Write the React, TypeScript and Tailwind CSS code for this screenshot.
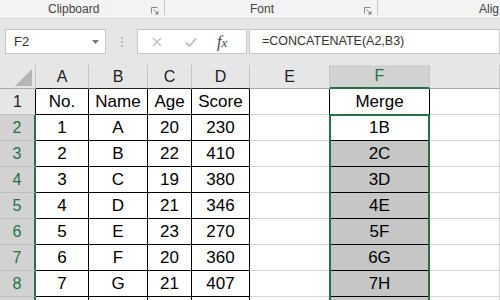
import React from 'react';

const GREEN = '#217346';

const columns = [
  { key: 'A', w: 'w-[53px]' },
  { key: 'B', w: 'w-[59px]' },
  { key: 'C', w: 'w-[44px]' },
  { key: 'D', w: 'w-[58px]' },
  { key: 'E', w: 'w-[80px]' },
  { key: 'F', w: 'w-[100px]' },
  // G is wide, its letter sits off screen
  { key: '', w: 'flex-1' },
];

const rows: string[][] = [
  ['No.', 'Name', 'Age', 'Score', '', 'Merge'],
  ['1', 'A', '20', '230', '', '1B'],
  ['2', 'B', '22', '410', '', '2C'],
  ['3', 'C', '19', '380', '', '3D'],
  ['4', 'D', '21', '346', '', '4E'],
  ['5', 'E', '23', '270', '', '5F'],
  ['6', 'F', '20', '360', '', '6G'],
  ['7', 'G', '21', '407', '', '7H'],
  ['', '', '', '', '', ''],
];

const Launcher = () => (
  <svg width="8" height="8" viewBox="0 0 8 8" className="block">
    <path d="M0.5 6.5 V0.5 H6.5" fill="none" stroke="#8a8a8a" strokeWidth="1" />
    <path d="M2.5 2.5 L6 6" stroke="#8a8a8a" strokeWidth="1" />
    <path d="M3.5 7.5 H7.5 V3.5 Z" fill="#8a8a8a" />
  </svg>
);

// table cells get black borders, the rest light gridlines
const cellClass = (col: number, row: number) => {
  const base = 'h-full flex items-center justify-center border-r border-b';
  if (col <= 3) return `${base} border-r-black border-b-black`;
  if (col === 4) return `${base} border-r-black border-b-[#d4d4d4]`;
  if (col === 5) return `${base} border-r-black border-b-black ${row >= 2 ? 'bg-[#c6c6c6]' : 'bg-white'}`;
  return `${base} border-r-[#d4d4d4] border-b-[#d4d4d4]`;
};

const App: React.FC = () => {
  return (
    <div className="w-[500px] h-[300px] overflow-hidden bg-[#e6e6e6] text-[#222]" style={{ fontFamily: '"Liberation Sans", Arial, sans-serif' }}>
      {/* Ribbon group labels */}
      <div className="h-[19px] bg-[#f3f3f3] border-b border-[#d8d8d8] flex text-[12px] text-[#444]">
        <div className="w-[165px] h-[15px] flex items-center border-r border-[#c6c6c6] pt-[3px]">
          <span className="ml-[48px]">Clipboard</span>
          <span className="ml-auto mr-[5px] mt-[4px]"><Launcher /></span>
        </div>
        <div className="w-[213px] h-[15px] flex items-center border-r border-[#c6c6c6] pt-[3px]">
          <span className="ml-[85px]">Font</span>
          <span className="ml-auto mr-[5px] mt-[4px]"><Launcher /></span>
        </div>
        <div className="h-[15px] flex items-center pt-[3px]">
          <span className="ml-[101px]">Alig</span>
        </div>
      </div>

      {/* Formula bar */}
      <div className="h-[46px] pt-[10px] flex">
        <div className="ml-[5px] w-[101px] h-[25px] bg-white border border-[#c6c6c6] flex items-center pl-[8px] pr-[6px]">
          <span className="text-[13px] text-[#333]">F2</span>
          <svg width="7" height="4" viewBox="0 0 7 4" className="ml-auto">
            <path d="M0 0 H7 L3.5 4 Z" fill="#777" />
          </svg>
        </div>
        <div className="w-[31px] h-[25px] flex flex-col items-center justify-center gap-[2px]">
          <span className="w-[2px] h-[2px] bg-[#b8b8b8]" />
          <span className="w-[2px] h-[2px] bg-[#b8b8b8]" />
          <span className="w-[2px] h-[2px] bg-[#b8b8b8]" />
        </div>
        <div className="w-[110px] h-[25px] bg-white border border-[#c6c6c6] flex items-center">
          <svg width="10" height="10" viewBox="0 0 10 10" className="ml-[14px]">
            <path d="M1 1 L9 9 M9 1 L1 9" stroke="#bdbdbd" strokeWidth="1.3" />
          </svg>
          <svg width="12" height="10" viewBox="0 0 12 10" className="ml-[23px]">
            <path d="M1 5.5 L4.5 9 L11 1.5" fill="none" stroke="#bdbdbd" strokeWidth="1.8" />
          </svg>
          <span className="ml-[20px] italic text-[#444] text-[16px] leading-none" style={{ fontFamily: '"Liberation Serif", serif' }}>
            f<span className="text-[13px]">x</span>
          </span>
        </div>
        <div className="ml-[2px] flex-1 h-[25px] bg-white border border-[#c6c6c6] flex items-center pl-[12px]">
          <span className="text-[12.5px] text-[#333]">=CONCATENATE(A2,B3)</span>
        </div>
      </div>

      {/* Column headers */}
      <div className="h-[24px] flex text-[16px]">
        <div className="w-[36px] h-full border-r border-b border-[#c6c6c6] border-b-[#ababab] flex items-end justify-end pr-[3px] pb-[2px]">
          <svg width="17" height="17" viewBox="0 0 17 17">
            <path d="M17 0 V17 H0 Z" fill="#b4b4b4" />
          </svg>
        </div>
        {columns.map((c, i) => (
          <div
            key={i}
            className={`${c.w} h-full flex items-center justify-center border-r border-r-[#c6c6c6] ${
              i === 5
                ? 'bg-[#d2d2d2] text-[#217346] border-b-2 border-b-[#217346]'
                : i <= 3
                ? 'border-b border-b-[#222]'
                : 'border-b border-b-[#ababab]'
            }`}
          >
            {c.key}
          </div>
        ))}
      </div>

      {/* Grid body */}
      <div className="relative">
        {rows.map((r, ri) => (
          <div key={ri} className="h-[26px] flex">
            <div
              className={`w-[36px] h-full flex items-center justify-center text-[16px] border-b border-b-[#c0c0c0] ${
                ri === 0
                  ? 'bg-[#e6e6e6] border-r border-r-black'
                  : 'bg-[#d2d2d2] text-[#217346] border-r-2 border-r-[#217346]'
              }`}
            >
              {ri < 8 ? ri + 1 : ''}
            </div>
            {columns.map((c, ci) => (
              <div key={ci} className={`${c.w} ${cellClass(ci, ri)} ${ci !== 5 ? 'bg-white' : ''} text-[17px] text-black`}>
                {r[ci] ?? ''}
              </div>
            ))}
          </div>
        ))}
        {/* selection outline F2:F9 */}
        <div className="absolute left-[329px] top-[25px] w-[101px] h-[230px] border-2" style={{ borderColor: GREEN }} />
      </div>
    </div>
  );
};

export default App;
